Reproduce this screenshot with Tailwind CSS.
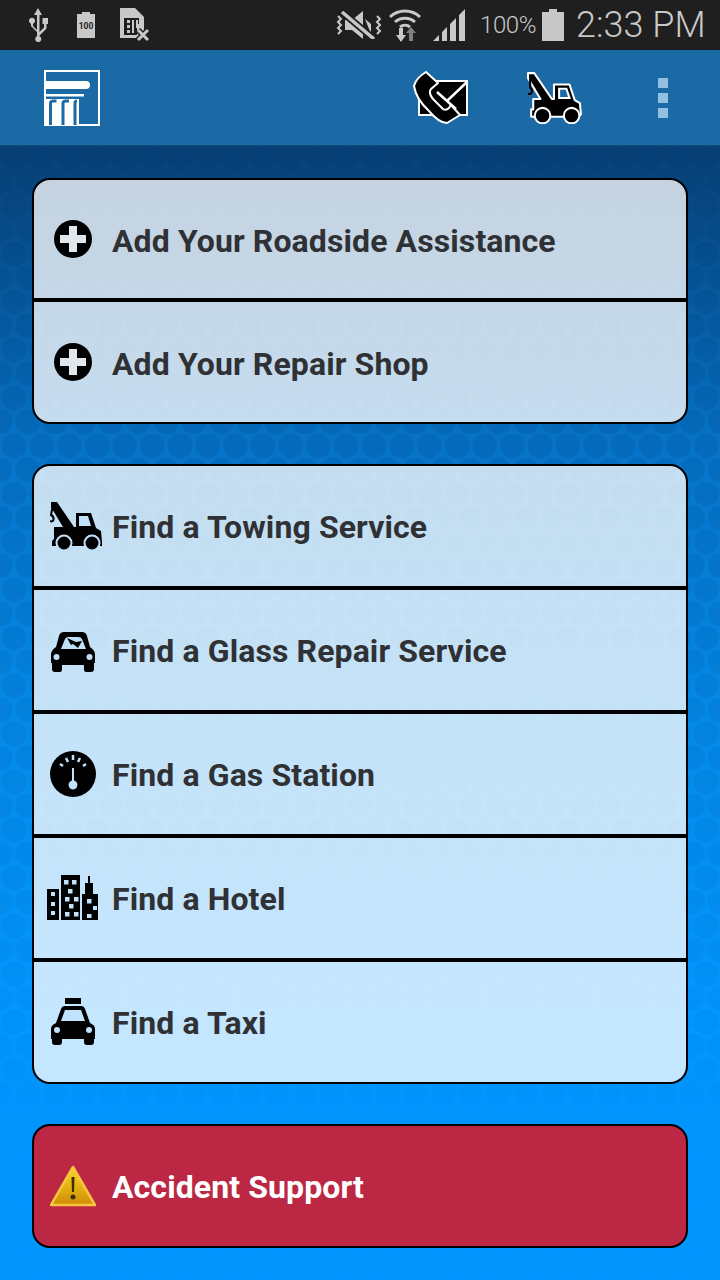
<!doctype html>
<html lang="en">
<head>
<meta charset="UTF-8" />
<title>Roadside</title>
<script src="https://cdn.jsdelivr.net/npm/@tailwindcss/browser@4"></script>
</head>
<body class="m-0 w-[720px] h-[1280px] overflow-hidden font-['Roboto',sans-serif] bg-[#0096ff]">
  <!-- status bar -->
  <div class="h-[50px] bg-[#1f1f1f] flex items-center text-[#c8c8c8]">
    <svg class="ml-[28px] w-[20px] h-[34px]" viewBox="0 0 20 34" fill="#c8c8c8"><path d="M10 0l4 7h-2.500v17l4.500-4.500V16h-1.500v-6h5.500v6h-1.500v4.500l-7 7v.8a3 3 0 1 1-2.500 0v-4.300l-6-6v-2.300a3 3 0 1 1 2 0V18l4 4V7H6z"/></svg>
    <svg class="ml-[29px] w-[18px] h-[26px]" viewBox="0 0 18 26"><path fill="#c8c8c8" d="M5 0h8v2h5v24H0V2h5z"/><text x="9" y="17" text-anchor="middle" font-size="8.500" font-family="Roboto" font-weight="700" fill="#1f1f1f">100</text></svg>
    <svg class="ml-[25px] w-[30px] h-[34px]" viewBox="0 0 30 34"><path fill="#c8c8c8" d="M0 0h15l9 9v21H0z"/><path fill="#1f1f1f" d="M4 10h15v6h-2v11H4z"/><path fill="#c8c8c8" d="M7 12h3v3H7zm0 5h3v3H7zm0 5h3v3H7zm5-10h2v13h-2zm4 0h2v8h-2z"/><path stroke="#1f1f1f" stroke-width="6" d="M18 22l10 10M28 22L18 32"/><path stroke="#c8c8c8" stroke-width="3" d="M18 22l10 10M28 22L18 32"/></svg>
    <svg class="ml-[186px] w-[46px] h-[28px]" viewBox="0 0 46 28"><path fill="#c8c8c8" d="M9 9h7l11-9v28L16 19H9z"/><path fill="#c8c8c8" d="M29 8l6 5v10z"/><path stroke="#1f1f1f" stroke-width="7" d="M6 1l32 27"/><path stroke="#c8c8c8" stroke-width="3.500" d="M6 1l32 27"/><path fill="none" stroke="#c8c8c8" stroke-width="2" d="M2 5l3 3-3 3 3 3-3 3 3 3-3 3M41 5l3 3-3 3 3 3-3 3 3 3-3 3"/></svg>
    <svg class="ml-[6px] w-[34px] h-[34px]" viewBox="0 0 34 34"><g fill="none" stroke="#c8c8c8" stroke-width="3"><path d="M2 9a22 22 0 0 1 30 0"/><path d="M7 14a15 15 0 0 1 20 0"/><path d="M12 19a8 8 0 0 1 10 0"/></g><path fill="#c8c8c8" d="M11 20h4v7h3l-5 7-5-7h3z"/><path fill="#808080" d="M23 19l5 6h-3v8h-4v-8h-3z"/></svg>
    <svg class="ml-[11px] w-[33px] h-[32px]" viewBox="0 0 33 32" fill="#c8c8c8"><path d="M0 32l6-6v6zM9 23l5-5v14H9zM17 15l6-6v23h-6zM26 6l6-6v32h-6z"/></svg>
    <span class="ml-[14px] w-[62px] text-[24px] leading-none font-light tracking-[-0.4px]">100%</span>
    <svg class="w-[22px] h-[32px]" viewBox="0 0 22 32" fill="#c8c8c8"><path d="M7 0h8v3h7v29H0V3h7z"/></svg>
    <span class="ml-[12px] text-[36px] leading-none font-light">2:33 PM</span>
  </div>

  <!-- action bar -->
  <div class="relative z-10 h-[96px] bg-[#1b6aa5] flex items-center border-b border-[#0e4c7c]">
    <svg class="ml-[44px] w-[56px] h-[56px]" viewBox="0 0 56 56"><rect x="1" y="1" width="54" height="54" fill="none" stroke="#fff" stroke-width="2"/><path fill="#fff" d="M1 11h41a4 4 0 0 1 0 8H1zM1 24h39v2.500H1zM1 29h34v26H1z"/><path fill="none" stroke="#1b6aa5" stroke-width="3" d="M6.500 55V33q0-2 3-2h3M19 55V33q0-2 3-2h3M31 55V33q0-2 2-2"/></svg>
    <svg class="ml-[313px] w-[56px] h-[54px]" viewBox="0 0 56 54"><path fill="#000" stroke="#fff" stroke-width="2" d="M6 10h48v34H6z"/><path fill="none" stroke="#fff" stroke-width="2.500" d="M54 11L34 30 24 21M34 30l9 8"/><path fill="#000" stroke="#fff" stroke-width="2" stroke-linejoin="round" d="M13 1l12 11-7 6q-3 4 2 10l10 10q3 2 6-1l2-3 9 10-13 8q-8 0-18-12Q3 28 1 15q2-8 12-14z"/></svg>
    <svg class="ml-[58px] w-[56px] h-[52px]" viewBox="0 0 54 50"><path fill="#000" stroke="#fff" stroke-width="2" stroke-linejoin="round" d="M1 1h6l17 25h2V12h15l5 15 5 3 1 11-3 2H4v-7h2V26h7L1 6z"/><path fill="#1b6aa5" stroke="#fff" stroke-width="2" d="M31 16h7l3 9H31z"/><circle cx="15" cy="42" r="7.500" fill="#000" stroke="#fff" stroke-width="2"/><circle cx="43" cy="42" r="7.500" fill="#000" stroke="#fff" stroke-width="2"/><path fill="none" stroke="#000" stroke-width="2" d="M3 6v9c3 2 2 7-2 6"/></svg>
    <div class="ml-[75px] flex flex-col gap-[5px]">
      <div class="w-[10px] h-[10px] bg-[#93bfe0]"></div>
      <div class="w-[10px] h-[10px] bg-[#93bfe0]"></div>
      <div class="w-[10px] h-[10px] bg-[#93bfe0]"></div>
    </div>
  </div>

  <!-- main -->
  <div class="relative h-[1134px] bg-[linear-gradient(to_bottom,#00396f_0%,#0070c6_26%,#0088e8_50%,#0096ff_76%,#0096ff_100%)] px-[32px] pt-[32px]">
    <svg class="absolute inset-0 w-full h-full [mask-image:linear-gradient(to_bottom,black,rgb(0_0_0/0.7)_30%,rgb(0_0_0/0.15)_85%)]" aria-hidden="true">
      <defs>
        <pattern id="hex" width="27.700" height="48" patternUnits="userSpaceOnUse">
          <rect width="27.700" height="48" fill="#fff" fill-opacity="0.03"/>
          <circle cx="13.850" cy="12" r="12.500" fill="#003a78" fill-opacity="0.2"/>
          <circle cx="0" cy="36" r="12.500" fill="#003a78" fill-opacity="0.2"/>
          <circle cx="27.700" cy="36" r="12.500" fill="#003a78" fill-opacity="0.2"/>
        </pattern>
      </defs>
      <rect width="720" height="1134" fill="url(#hex)"/>
    </svg>

    <div class="relative flex flex-col">
      <div class="rounded-[18px] border-2 border-black bg-white/77 overflow-hidden">
        <div class="h-[118px] flex items-center text-[32px] tracking-[0.1px] font-bold text-[#2f3135]">
          <div class="w-[78px] flex justify-center">
            <svg class="w-[40px] h-[40px]" viewBox="0 0 40 40"><circle cx="20" cy="20" r="19" fill="#000"/><path fill="#e0e8ee" d="M16 7h8v9h9v8h-9v9h-8v-9H7v-8h9z"/></svg>
          </div>
          <span class="pt-[4px]">Add Your Roadside Assistance</span>
        </div>
        <div class="h-[4px] bg-black"></div>
        <div class="h-[120px] flex items-center text-[32px] tracking-[0.1px] font-bold text-[#2f3135]">
          <div class="w-[78px] flex justify-center">
            <svg class="w-[40px] h-[40px]" viewBox="0 0 40 40"><circle cx="20" cy="20" r="19" fill="#000"/><path fill="#e0e8ee" d="M16 7h8v9h9v8h-9v9h-8v-9H7v-8h9z"/></svg>
          </div>
          <span class="pt-[4px]">Add Your Repair Shop</span>
        </div>
      </div>

      <div class="mt-[40px] rounded-[18px] border-2 border-black bg-white/77 overflow-hidden">
        <div class="h-[120px] flex items-center text-[32px] tracking-[0.1px] font-bold text-[#2f3135]">
          <div class="w-[78px] flex justify-center">
            <svg class="ml-[8px] w-[54px] h-[50px]" viewBox="0 0 54 50"><path fill="#000" d="M1 1h6l17 25h2V12h15l5 15 5 3 1 11v4H2v-5l2-2V26h9L1 6z"/><path fill="#c0e0f8" d="M29 15h9l3 10H29z"/><circle cx="14" cy="42" r="7.500" fill="#000" stroke="#c0e0f8" stroke-width="2"/><circle cx="42" cy="42" r="7.500" fill="#000" stroke="#c0e0f8" stroke-width="2"/><path fill="none" stroke="#000" stroke-width="2" d="M3 4L1 14c4 2 3 8-1 6"/></svg>
          </div>
          <span class="pt-[2px]">Find a Towing Service</span>
        </div>
        <div class="h-[4px] bg-black"></div>
        <div class="h-[120px] flex items-center text-[32px] tracking-[0.1px] font-bold text-[#2f3135]">
          <div class="w-[78px] flex justify-center">
            <svg class="mt-[4px] w-[46px] h-[40px]" viewBox="0 0 46 40"><path fill="#000" d="M14 0h18q4 0 5 4l3 11q5 3 5 8v8h-1v6q0 3-3 3h-5q-2 0-2-3v-4H12v4q0 3-2 3H5q-3 0-3-3v-6H1v-8q0-5 5-8L9 4q1-4 5-4z"/><path fill="#c0e0f8" d="M11 17l4-10q1-2 3-2h10q3 0 4 2l4 10z"/><path fill="#000" d="M17 6l9 4 6-1-4 7-5-4-2 1z"/><circle cx="6.500" cy="25" r="3" fill="#c0e0f8"/><circle cx="39.500" cy="25" r="3" fill="#c0e0f8"/></svg>
          </div>
          <span class="pt-[2px]">Find a Glass Repair Service</span>
        </div>
        <div class="h-[4px] bg-black"></div>
        <div class="h-[120px] flex items-center text-[32px] tracking-[0.1px] font-bold text-[#2f3135]">
          <div class="w-[78px] flex justify-center">
            <svg class="w-[46px] h-[46px]" viewBox="0 0 46 46"><circle cx="23" cy="23" r="23" fill="#000"/><path fill="#c2e3fc" d="M22 17h2v12.500a4.500 4.500 0 1 1-2 0z"/><g stroke="#c2e3fc" stroke-width="2.500"><path d="M10 13l3 2M16 7l2 4M23 4v5M30 7l-2 4M36 13l-3 2"/></g></svg>
          </div>
          <span class="pt-[2px]">Find a Gas Station</span>
        </div>
        <div class="h-[4px] bg-black"></div>
        <div class="h-[120px] flex items-center text-[32px] tracking-[0.1px] font-bold text-[#2f3135]">
          <div class="w-[78px] flex justify-center">
            <svg class="w-[52px] h-[46px]" viewBox="0 0 52 46"><path fill="#000" d="M0 14h12v31H0zM14 0h19v45H14zM35 19h3v-11h3V1h2v7h3v11h5v26H35z"/><path fill="#c2e3fc" d="M4 17h4v4H4zM4 27h4v4H4zM4 36h4v4H4zM17 5h4.500v4.500H17zM25 5h4.500v4.500H25zM21 14h4.500v4.500H21zM18 22h4.500v4.500H18zM27 22h4.500v4.500H27zM22 29h4.500v4.500H22zM18 37h4.500v4.500H18zM27 37h4.500v4.500H27zM40 24h4.500v4.500H40zM46 31h4v4h-4zM40 39h4.500v4H40z"/></svg>
          </div>
          <span class="pt-[2px]">Find a Hotel</span>
        </div>
        <div class="h-[4px] bg-black"></div>
        <div class="h-[120px] flex items-center text-[32px] tracking-[0.1px] font-bold text-[#2f3135]">
          <div class="w-[78px] flex justify-center">
            <svg class="w-[46px] h-[48px]" viewBox="0 0 46 48"><path fill="#000" d="M15 0h16v6H15zM15 8h16q3 0 4 3l5 14q5 2 5 6v10h-1v3q0 3-3 3h-4q-3 0-3-3v-3H12v3q0 3-3 3H5q-3 0-3-3v-3H1V31q0-4 5-6l5-14q1-3 4-3z"/><path fill="#c2e3fc" d="M15 12h16l4 11H11z"/><circle cx="7" cy="32" r="3" fill="#c2e3fc"/><circle cx="39" cy="32" r="3" fill="#c2e3fc"/></svg>
          </div>
          <span class="pt-[2px]">Find a Taxi</span>
        </div>
      </div>

      <div class="mt-[40px] h-[124px] rounded-[18px] border-2 border-black bg-[#bc2844] flex items-center text-[32px] tracking-[0.1px] font-bold text-white">
        <div class="w-[78px] flex justify-center">
          <svg class="w-[46px] h-[42px]" viewBox="0 0 46 42">
            <defs><linearGradient id="warn" x1="0" y1="0" x2="0" y2="1"><stop offset="0" stop-color="#f8d820"/><stop offset="1" stop-color="#cf8c08"/></linearGradient></defs>
            <path fill="url(#warn)" stroke="#f7c63c" stroke-width="2.500" stroke-linejoin="round" d="M23 2L45 40H1z"/>
            <path fill="#3a3000" d="M21.500 12h3l-.5 15h-2z"/><circle cx="23" cy="32" r="2.500" fill="#3a3000"/>
          </svg>
        </div>
        <span class="pt-[2px]">Accident Support</span>
      </div>
    </div>
  </div>
</body>
</html>
